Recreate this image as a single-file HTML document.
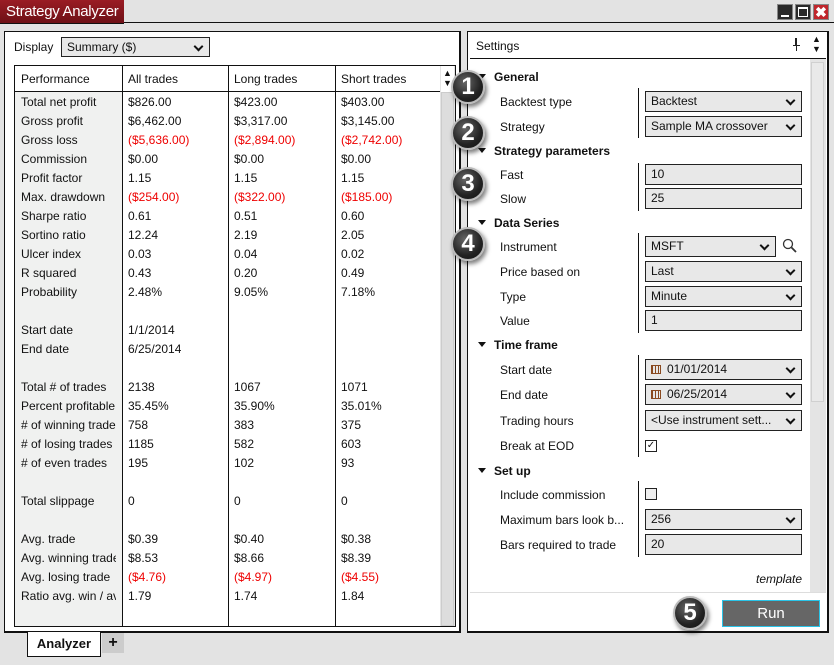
<!DOCTYPE html>
<html><head><meta charset="utf-8"><style>
*{margin:0;padding:0;box-sizing:border-box}
body{width:834px;height:665px;background:#e3e3e3;font-family:"Liberation Sans",sans-serif;font-size:12px;color:#111;position:relative;overflow:hidden}
.a{position:absolute}
.row{position:absolute;left:0;height:19px;line-height:19px;white-space:nowrap}
.row span{position:absolute;overflow:hidden}
.row span:first-child{width:95px}
.r{color:#e00}
.lbl{position:absolute;left:500px;font-size:12px;line-height:16px}
.hd{position:absolute;left:494px;font-weight:bold;font-size:12px;line-height:16px}
.hd:before{content:"";position:absolute;left:-16px;top:5px;border-left:4px solid transparent;border-right:4px solid transparent;border-top:5px solid #111}
.ctl{position:absolute;left:645px;width:157px;height:21px;background:#e8e8e8;border:1px solid #222;line-height:19px;padding-left:5px;font-size:12px;white-space:nowrap}
.dd:after{content:"";position:absolute;right:7px;top:5px;width:5px;height:5px;border-right:2px solid #111;border-bottom:2px solid #111;transform:rotate(45deg)}
.vs{position:absolute;left:638px;width:1px;background:#111}
.c{position:absolute;width:34px;height:34px;border-radius:50%;background:radial-gradient(circle at 40% 35%,#666,#222 60%,#111);border:2px solid #bbb;box-shadow:2px 3px 4px rgba(0,0,0,.5);color:#fff;font-weight:bold;font-size:24px;text-align:center;line-height:30px;font-family:"Liberation Sans",sans-serif}
.cal{display:inline-block;width:10px;height:9px;border:1px solid #8a4a20;background:repeating-linear-gradient(90deg,#8a4a20 0 1px,transparent 1px 3px);margin-right:6px;vertical-align:-1px}
</style></head><body>
<div class="a" style="left:0;top:0;width:124px;height:23px;background:linear-gradient(#9a1c24,#6e1016);color:#fff;font-size:15px;line-height:23px;padding-left:6px;white-space:nowrap;overflow:hidden;letter-spacing:-0.3px">Strategy Analyzer</div>
<div class="a" style="left:124px;top:22px;width:710px;height:1px;background:#111"></div>
<div class="a" style="left:0;top:23px;width:124px;height:1px;background:#111"></div>
<div class="a" style="left:777px;top:4px;width:16px;height:16px;background:#2a2a2a;border:1px solid #888"><div class="a" style="left:3px;top:10px;width:8px;height:2px;background:#fff"></div></div>
<div class="a" style="left:795px;top:4px;width:16px;height:16px;background:#2a2a2a;border:1px solid #888"><div class="a" style="left:2px;top:2px;width:10px;height:10px;border:1px solid #fff;border-top-width:2px"></div></div>
<div class="a" style="left:813px;top:4px;width:16px;height:16px;background:#c0262c;border:1px solid #888;color:#fff;font-weight:bold;font-size:14px;line-height:14px;text-align:center">✖</div>

<div class="a" style="left:4px;top:31px;width:457px;height:602px;background:#fff;border:1px solid #111;border-right-width:2px;border-bottom-width:2px"></div>
<div class="a" style="left:14px;top:39px;font-size:12px;line-height:16px">Display</div>
<div class="a dd" style="left:61px;top:37px;width:149px;height:20px;background:#e8e8e8;border:1px solid #222;line-height:18px;padding-left:5px">Summary ($)</div>
<div class="a" style="left:14px;top:65px;width:442px;height:562px;border:1px solid #111;background:#fff"></div>
<div class="a" style="left:15px;top:91px;width:107px;height:535px;background:#f0f1f0"></div>
<div class="a" style="left:15px;top:91px;width:425px;height:1px;background:#111"></div>
<div class="a" style="left:122px;top:66px;width:1px;height:560px;background:#111"></div>
<div class="a" style="left:228px;top:66px;width:1px;height:560px;background:#111"></div>
<div class="a" style="left:335px;top:66px;width:1px;height:560px;background:#111"></div>
<div class="a" style="left:440px;top:66px;width:15px;height:560px;background:#e4e4e4"></div>
<div class="a" style="left:441px;top:92px;width:13px;height:534px;background:#ddd;border:1px solid #ccc"></div>
<div class="a" style="left:441px;top:66px;width:13px;height:26px;background:#fff;font-size:9px;line-height:10px;text-align:center;padding-top:2px">▲<br>▼</div>
<div class="a" style="left:21px;top:71px;line-height:16px">Performance</div>
<div class="a" style="left:128px;top:71px;line-height:16px">All trades</div>
<div class="a" style="left:234px;top:71px;line-height:16px">Long trades</div>
<div class="a" style="left:341px;top:71px;line-height:16px">Short trades</div>
<div class="a" style="left:15px;top:0">
<div class="row" style="top:93px"><span style="left:6px">Total net profit</span><span style="left:113px">$826.00</span><span style="left:219px">$423.00</span><span style="left:326px">$403.00</span></div>
<div class="row" style="top:112px"><span style="left:6px">Gross profit</span><span style="left:113px">$6,462.00</span><span style="left:219px">$3,317.00</span><span style="left:326px">$3,145.00</span></div>
<div class="row" style="top:131px"><span style="left:6px">Gross loss</span><span class="r" style="left:113px">($5,636.00)</span><span class="r" style="left:219px">($2,894.00)</span><span class="r" style="left:326px">($2,742.00)</span></div>
<div class="row" style="top:150px"><span style="left:6px">Commission</span><span style="left:113px">$0.00</span><span style="left:219px">$0.00</span><span style="left:326px">$0.00</span></div>
<div class="row" style="top:169px"><span style="left:6px">Profit factor</span><span style="left:113px">1.15</span><span style="left:219px">1.15</span><span style="left:326px">1.15</span></div>
<div class="row" style="top:188px"><span style="left:6px">Max. drawdown</span><span class="r" style="left:113px">($254.00)</span><span class="r" style="left:219px">($322.00)</span><span class="r" style="left:326px">($185.00)</span></div>
<div class="row" style="top:207px"><span style="left:6px">Sharpe ratio</span><span style="left:113px">0.61</span><span style="left:219px">0.51</span><span style="left:326px">0.60</span></div>
<div class="row" style="top:226px"><span style="left:6px">Sortino ratio</span><span style="left:113px">12.24</span><span style="left:219px">2.19</span><span style="left:326px">2.05</span></div>
<div class="row" style="top:245px"><span style="left:6px">Ulcer index</span><span style="left:113px">0.03</span><span style="left:219px">0.04</span><span style="left:326px">0.02</span></div>
<div class="row" style="top:264px"><span style="left:6px">R squared</span><span style="left:113px">0.43</span><span style="left:219px">0.20</span><span style="left:326px">0.49</span></div>
<div class="row" style="top:283px"><span style="left:6px">Probability</span><span style="left:113px">2.48%</span><span style="left:219px">9.05%</span><span style="left:326px">7.18%</span></div>
<div class="row" style="top:321px"><span style="left:6px">Start date</span><span style="left:113px">1/1/2014</span></div>
<div class="row" style="top:340px"><span style="left:6px">End date</span><span style="left:113px">6/25/2014</span></div>
<div class="row" style="top:378px"><span style="left:6px">Total # of trades</span><span style="left:113px">2138</span><span style="left:219px">1067</span><span style="left:326px">1071</span></div>
<div class="row" style="top:397px"><span style="left:6px">Percent profitable</span><span style="left:113px">35.45%</span><span style="left:219px">35.90%</span><span style="left:326px">35.01%</span></div>
<div class="row" style="top:416px"><span style="left:6px"># of winning trades</span><span style="left:113px">758</span><span style="left:219px">383</span><span style="left:326px">375</span></div>
<div class="row" style="top:435px"><span style="left:6px"># of losing trades</span><span style="left:113px">1185</span><span style="left:219px">582</span><span style="left:326px">603</span></div>
<div class="row" style="top:454px"><span style="left:6px"># of even trades</span><span style="left:113px">195</span><span style="left:219px">102</span><span style="left:326px">93</span></div>
<div class="row" style="top:492px"><span style="left:6px">Total slippage</span><span style="left:113px">0</span><span style="left:219px">0</span><span style="left:326px">0</span></div>
<div class="row" style="top:530px"><span style="left:6px">Avg. trade</span><span style="left:113px">$0.39</span><span style="left:219px">$0.40</span><span style="left:326px">$0.38</span></div>
<div class="row" style="top:549px"><span style="left:6px">Avg. winning trade</span><span style="left:113px">$8.53</span><span style="left:219px">$8.66</span><span style="left:326px">$8.39</span></div>
<div class="row" style="top:568px"><span style="left:6px">Avg. losing trade</span><span class="r" style="left:113px">($4.76)</span><span class="r" style="left:219px">($4.97)</span><span class="r" style="left:326px">($4.55)</span></div>
<div class="row" style="top:587px"><span style="left:6px">Ratio avg. win / avg. loss</span><span style="left:113px">1.79</span><span style="left:219px">1.74</span><span style="left:326px">1.84</span></div>
</div>
<div class="a" style="left:27px;top:632px;width:74px;height:25px;background:#fff;border:1px solid #111;border-top:none;font-weight:bold;font-size:13px;line-height:24px;text-align:center">Analyzer</div>
<div class="a" style="left:102px;top:633px;width:22px;height:20px;background:#ccc;font-weight:bold;font-size:16px;line-height:20px;text-align:center">+</div>

<div class="a" style="left:467px;top:31px;width:362px;height:602px;background:#fff;border:1px solid #111;border-right-width:2px;border-bottom-width:2px"></div>
<div class="a" style="left:470px;top:58px;width:356px;height:1px;background:#111"></div>
<div class="a" style="left:476px;top:38px;line-height:16px">Settings</div>
<div class="a" style="left:795px;top:38px;width:2px;height:8px;border:1px solid #222;border-bottom:none"></div>
<div class="a" style="left:793px;top:45px;width:7px;height:1px;background:#222"></div>
<div class="a" style="left:796px;top:46px;width:1px;height:5px;background:#222"></div>
<div class="a" style="left:812px;top:34px;font-size:9px;line-height:10px">▲<br>▼</div>
<div class="a" style="left:810px;top:59px;width:16px;height:533px;background:#e4e4e4"></div>
<div class="a" style="left:811px;top:62px;width:13px;height:340px;background:#e9e9e9;border:1px solid #d0d0d0"></div>
<div class="a" style="left:470px;top:592px;width:356px;height:1px;background:#ddd"></div>
<div class="a" style="left:470px;top:593px;width:356px;height:38px;background:#fff"></div>
<div class="a" style="left:722px;top:600px;width:98px;height:27px;background:#666;border:1px solid #2ac4e8;color:#fff;font-size:15px;line-height:25px;text-align:center">Run</div>

<div class="hd" style="top:69px">General</div>
<div class="lbl" style="top:94px">Backtest type</div>
<div class="lbl" style="top:119px">Strategy</div>
<div class="vs" style="top:88px;height:50px"></div>
<div class="ctl dd" style="top:91px">Backtest</div>
<div class="ctl dd" style="top:116px">Sample MA crossover</div>
<div class="hd" style="top:143px">Strategy parameters</div>
<div class="vs" style="top:163px;height:48px"></div>
<div class="lbl" style="top:167px">Fast</div>
<div class="lbl" style="top:191px">Slow</div>
<div class="ctl" style="top:164px">10</div>
<div class="ctl" style="top:188px">25</div>
<div class="hd" style="top:215px">Data Series</div>
<div class="vs" style="top:233px;height:100px"></div>
<div class="lbl" style="top:239px">Instrument</div>
<div class="lbl" style="top:264px">Price based on</div>
<div class="lbl" style="top:289px">Type</div>
<div class="lbl" style="top:313px">Value</div>
<div class="ctl dd" style="top:236px;width:131px">MSFT</div>
<svg class="a" style="left:782px;top:238px" width="16" height="16" viewBox="0 0 16 16"><circle cx="6" cy="6" r="4.5" fill="none" stroke="#333" stroke-width="1.3"/><path d="M9.5 9.5L14 14" stroke="#333" stroke-width="1.8"/></svg>
<div class="ctl dd" style="top:261px">Last</div>
<div class="ctl dd" style="top:286px">Minute</div>
<div class="ctl" style="top:310px">1</div>
<div class="hd" style="top:337px">Time frame</div>
<div class="vs" style="top:355px;height:102px"></div>
<div class="lbl" style="top:362px">Start date</div>
<div class="lbl" style="top:387px">End date</div>
<div class="lbl" style="top:413px">Trading hours</div>
<div class="lbl" style="top:438px">Break at EOD</div>
<div class="ctl dd" style="top:359px"><span class="cal"></span>01/01/2014</div>
<div class="ctl dd" style="top:384px"><span class="cal"></span>06/25/2014</div>
<div class="ctl dd" style="top:410px">&lt;Use instrument sett...</div>
<div class="a" style="left:645px;top:440px;width:12px;height:12px;border:1px solid #222;background:#fff;font-size:10px;line-height:10px;text-align:center">✓</div>
<div class="hd" style="top:463px">Set up</div>
<div class="vs" style="top:481px;height:76px"></div>
<div class="lbl" style="top:487px">Include commission</div>
<div class="lbl" style="top:512px">Maximum bars look b...</div>
<div class="lbl" style="top:537px">Bars required to trade</div>
<div class="a" style="left:645px;top:488px;width:12px;height:12px;border:1px solid #222;background:#eee"></div>
<div class="ctl dd" style="top:509px">256</div>
<div class="ctl" style="top:534px">20</div>
<div class="a" style="left:756px;top:572px;font-style:italic;line-height:14px">template</div>

<div class="c" style="left:451px;top:70px">1</div>
<div class="c" style="left:451px;top:116px">2</div>
<div class="c" style="left:451px;top:167px">3</div>
<div class="c" style="left:451px;top:227px">4</div>
<div class="c" style="left:673px;top:596px">5</div>
</body></html>
